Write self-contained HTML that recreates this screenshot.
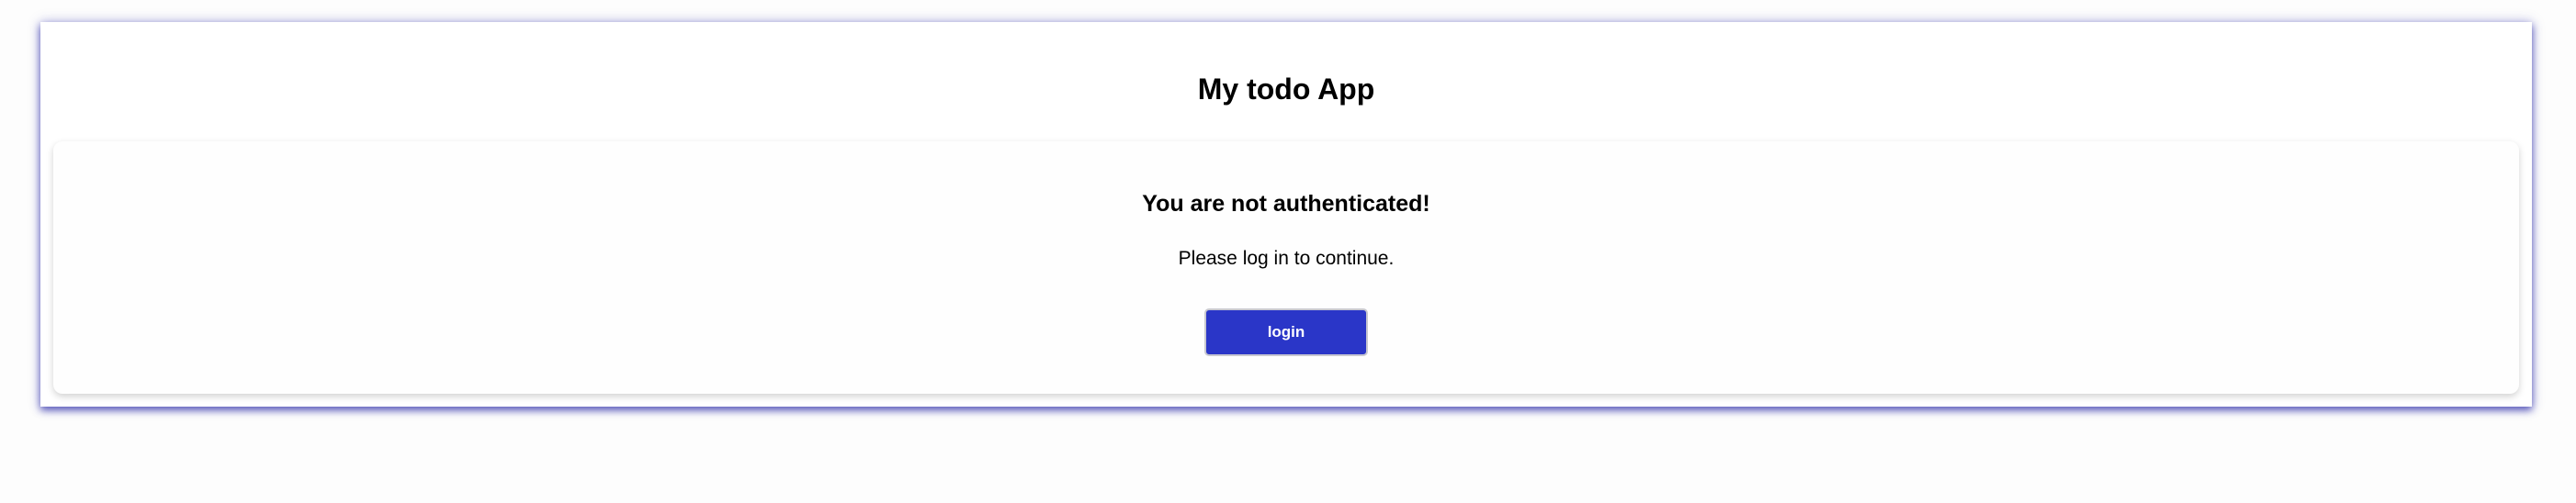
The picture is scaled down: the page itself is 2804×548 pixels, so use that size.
<!DOCTYPE html>
<html><head><style>
html,body{margin:0;padding:0;background:#fdfdfd;width:2804px;height:548px;overflow:hidden;font-family:"Comic Sans MS","Liberation Sans",sans-serif;}
.outer{position:absolute;left:44px;top:24px;width:2712px;height:419px;background:#fff;box-shadow:0 4px 8px rgba(50,50,170,0.75),0 0 12px rgba(60,60,180,0.35);}
h1{position:absolute;left:0;right:0;top:53px;margin:0;text-align:center;font-size:32px;font-weight:bold;color:#000;line-height:40px;}
.card{position:absolute;left:14px;top:130px;width:2684px;height:275px;background:#fefefe;border-radius:10px;box-shadow:0 3px 8px rgba(0,0,0,0.18);}
h2{position:absolute;left:0;right:0;top:51px;margin:0;text-align:center;font-size:25px;font-weight:bold;line-height:34px;}
p{position:absolute;left:0;right:0;top:113px;margin:0;text-align:center;font-size:21px;line-height:30px;}
.btn{position:absolute;left:1253px;top:182px;width:174px;height:48px;background:#2a36c8;border:2px solid #c8c8d0;border-radius:5px;color:#fff;font-weight:bold;font-size:17px;text-align:center;line-height:48px;box-sizing:content-box;}
</style></head><body>
<div class="outer">
<h1>My todo App</h1>
<div class="card">
<h2>You are not authenticated!</h2>
<p>Please log in to continue.</p>
<div class="btn">login</div>
</div>
</div>
</body></html>
